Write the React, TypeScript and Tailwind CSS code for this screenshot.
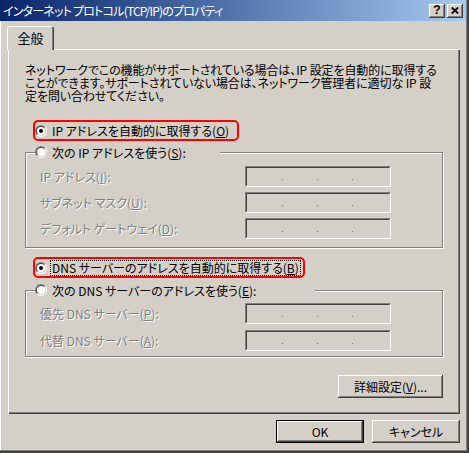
import React from "react";

function Radio({ checked }: { checked?: boolean }) {
  return (
    <span className="inline-block w-[12px] h-[12px] shrink-0 rounded-full border border-t-[#808080] border-l-[#808080] border-r-white border-b-white">
      <span className="flex items-center justify-center w-full h-full rounded-full bg-white border border-t-[#404040] border-l-[#404040] border-r-[#d4d0c8] border-b-[#d4d0c8]">
        {checked && <span className="w-[4px] h-[4px] rounded-full bg-black" />}
      </span>
    </span>
  );
}

function IpField() {
  return (
    <div className="w-[146px] h-[21px] border border-t-[#808080] border-l-[#808080] border-r-white border-b-white">
      <div className="flex items-center h-full pl-[35px] pt-[5px] gap-[34px] border border-t-[#404040] border-l-[#404040] border-r-[#d4d0c8] border-b-[#d4d0c8]">
        <span className="w-[1px] h-[1px] bg-[#808080]" />
        <span className="w-[1px] h-[1px] bg-[#808080]" />
        <span className="w-[1px] h-[1px] bg-[#808080]" />
      </div>
    </div>
  );
}

function FieldRow({ label, hotkey, rest }: { label: string; hotkey: string; rest: string }) {
  return (
    <div className="flex items-center h-[21px]">
      <span className="w-[205px] whitespace-nowrap text-[#808080] [text-shadow:1px_1px_0_#ffffff]">
        {label}(<u>{hotkey}</u>){rest}
      </span>
      <IpField />
    </div>
  );
}

function Button({ children, isDefault, width }: { children: React.ReactNode; isDefault?: boolean; width: string }) {
  return (
    <div className={`${width} h-[23px] ${isDefault ? "border border-black" : ""}`}>
      <div className="flex items-center justify-center w-full h-full bg-[#d4d0c8] shadow-[inset_-1px_-1px_0_#404040,inset_1px_1px_0_#ffffff,inset_-2px_-2px_0_#808080]">
        {children}
      </div>
    </div>
  );
}

export default function App() {
  return (
    <div className="w-[469px] h-[453px] flex flex-col bg-[#d4d0c8] text-black text-[12px] leading-[13px] font-['Noto_Sans_CJK_JP','Noto_Sans_CJK_SC',sans-serif] [font-feature-settings:'palt'] shadow-[inset_-2px_-2px_0_#404040,inset_-3px_-3px_0_#808080,inset_1px_0_0_#ffffff]">
      {/* title bar */}
      <div className="flex items-center h-[21px] mr-[3px] pl-[3px] pr-[3px] bg-linear-to-r from-[#0a246a] to-[#a6caf0]">
        <span className="flex-1 text-white whitespace-nowrap tracking-[-0.8px]">
          インターネット プロトコル(TCP/IP)のプロパティ
        </span>
        <div className="flex gap-[2px]">
          <div className="flex items-center justify-center w-[16px] h-[14px] bg-[#d4d0c8] shadow-[inset_-1px_-1px_0_#404040,inset_1px_1px_0_#ffffff,inset_-2px_-2px_0_#808080]">
            <span className="font-['Liberation_Sans',sans-serif] font-bold text-[12px] leading-none mb-[1px]">?</span>
          </div>
          <div className="flex items-center justify-center w-[16px] h-[14px] bg-[#d4d0c8] shadow-[inset_-1px_-1px_0_#404040,inset_1px_1px_0_#ffffff,inset_-2px_-2px_0_#808080]">
            <svg width="8" height="7" viewBox="0 0 8 7" className="mb-[1px]">
              <path d="M0.8 0.5 L7.2 6.5 M7.2 0.5 L0.8 6.5" stroke="black" strokeWidth="1.8" />
            </svg>
          </div>
        </div>
      </div>

      {/* tab */}
      <div className="mt-[5px] ml-[7px] w-[47px] h-[24px] -mb-[1px] relative z-10 flex items-center justify-center pb-[1px] text-[13px] bg-[#d4d0c8] rounded-t-[3px] shadow-[inset_1px_1px_0_#ffffff,inset_-1px_0_0_#404040,inset_-2px_0_0_#808080]">
        全般
      </div>

      {/* panel */}
      <div className="ml-[8px] w-[452px] h-[365px] flex flex-col pl-[17px] pt-[14px] shadow-[inset_1px_1px_0_#ffffff,inset_-1px_-1px_0_#404040,inset_-2px_-2px_0_#808080]">
        <div className="whitespace-nowrap tracking-[-0.1px]">
          <div className="h-[13px]">ネットワークでこの機能がサポートされている場合は、IP 設定を自動的に取得する</div>
          <div className="h-[13px]">ことができます。サポートされていない場合は、ネットワーク管理者に適切な IP 設</div>
          <div className="h-[13px]">定を問い合わせてください。</div>
        </div>

        <div className="mt-[18px] ml-[8px] w-[206px] h-[21px] flex items-center gap-[5px] border-2 border-[#ff0000] rounded-[5px]">
          <Radio checked />
          <span className="whitespace-nowrap">
            IP アドレスを自動的に取得する(<u>O</u>)
          </span>
        </div>

        <div className="mt-[11px] relative w-[418px] flex flex-col gap-[5px] pt-[13px] pl-[14px] pb-[8px] border border-[#808080] shadow-[1px_1px_0_#ffffff,inset_1px_1px_0_#ffffff]">
          <div className="absolute -top-[8px] left-[9px] w-[185px] h-[14px] flex items-center gap-[5px] bg-[#d4d0c8]">
            <Radio />
            <span className="whitespace-nowrap">
              次の IP アドレスを使う(<u>S</u>):
            </span>
          </div>
          <FieldRow label="IP アドレス" hotkey="I" rest=":" />
          <FieldRow label="サブネット マスク" hotkey="U" rest=":" />
          <FieldRow label="デフォルト ゲートウェイ" hotkey="D" rest=":" />
        </div>

        <div className="mt-[9px] ml-[8px] w-[272px] h-[21px] flex items-center gap-[3px] border-2 border-[#ff0000] rounded-[5px]">
          <Radio checked />
          <span className="whitespace-nowrap border border-dotted border-black px-[1px] leading-[14px]">
            DNS サーバーのアドレスを自動的に取得する(<u>B</u>)
          </span>
        </div>

        <div className="mt-[12px] relative w-[418px] flex flex-col gap-[6px] pt-[12px] pl-[14px] pb-[5px] border border-[#808080] shadow-[1px_1px_0_#ffffff,inset_1px_1px_0_#ffffff]">
          <div className="absolute -top-[8px] left-[9px] w-[280px] h-[14px] flex items-center gap-[5px] bg-[#d4d0c8]">
            <Radio />
            <span className="whitespace-nowrap">
              次の DNS サーバーのアドレスを使う(<u>E</u>):
            </span>
          </div>
          <FieldRow label="優先 DNS サーバー" hotkey="P" rest=":" />
          <FieldRow label="代替 DNS サーバー" hotkey="A" rest=":" />
        </div>

        <div className="mt-[18px] w-[418px] flex justify-end">
          <Button width="w-[105px]">
            詳細設定(<u>V</u>)...
          </Button>
        </div>
      </div>

      {/* bottom buttons */}
      <div className="mt-[6px] ml-[8px] w-[452px] flex justify-end gap-[8px]">
        <Button width="w-[88px]" isDefault>
          OK
        </Button>
        <Button width="w-[88px]">キャンセル</Button>
      </div>
    </div>
  );
}
